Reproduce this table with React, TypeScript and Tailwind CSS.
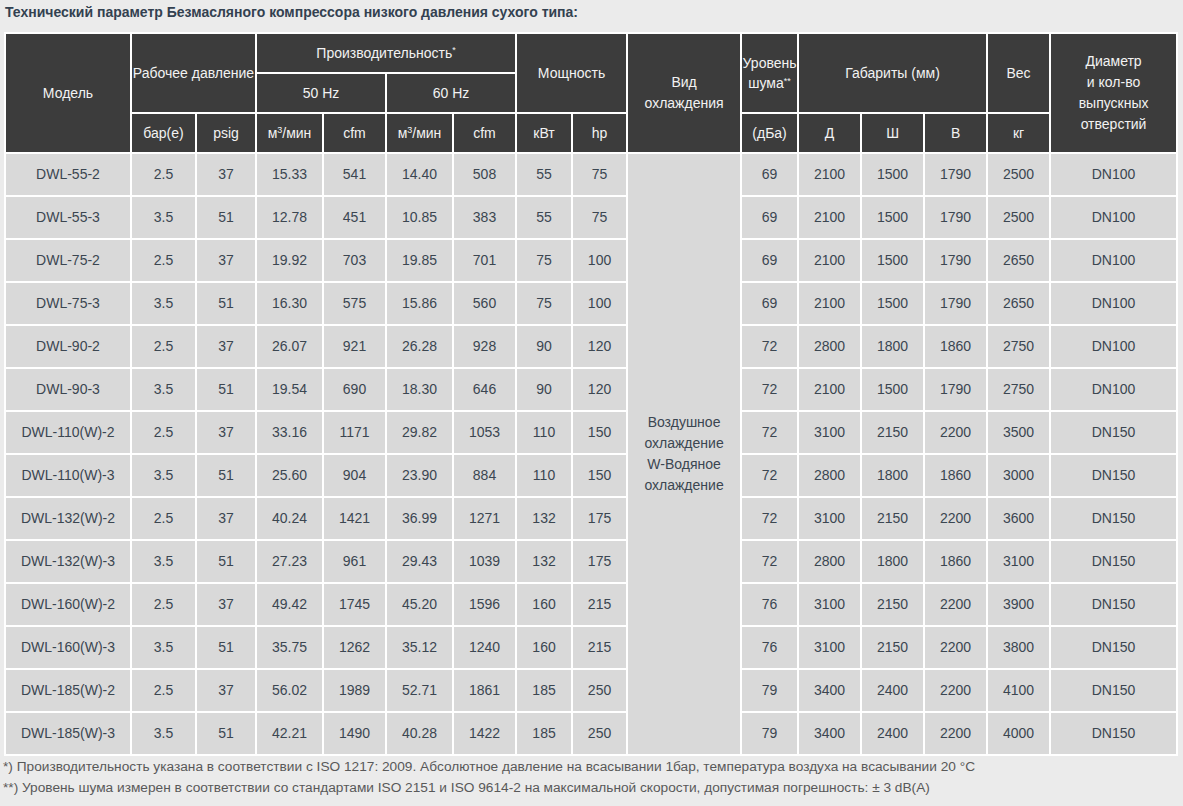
const COLS = [124, 63, 58, 65, 61, 65, 61, 54, 53, 112, 55, 61, 61, 61, 61, 125];

const ROWS: string[][] = [
  ["DWL-55-2", "2.5", "37", "15.33", "541", "14.40", "508", "55", "75", "69", "2100", "1500", "1790", "2500", "DN100"],
  ["DWL-55-3", "3.5", "51", "12.78", "451", "10.85", "383", "55", "75", "69", "2100", "1500", "1790", "2500", "DN100"],
  ["DWL-75-2", "2.5", "37", "19.92", "703", "19.85", "701", "75", "100", "69", "2100", "1500", "1790", "2650", "DN100"],
  ["DWL-75-3", "3.5", "51", "16.30", "575", "15.86", "560", "75", "100", "69", "2100", "1500", "1790", "2650", "DN100"],
  ["DWL-90-2", "2.5", "37", "26.07", "921", "26.28", "928", "90", "120", "72", "2800", "1800", "1860", "2750", "DN100"],
  ["DWL-90-3", "3.5", "51", "19.54", "690", "18.30", "646", "90", "120", "72", "2100", "1500", "1790", "2750", "DN100"],
  ["DWL-110(W)-2", "2.5", "37", "33.16", "1171", "29.82", "1053", "110", "150", "72", "3100", "2150", "2200", "3500", "DN150"],
  ["DWL-110(W)-3", "3.5", "51", "25.60", "904", "23.90", "884", "110", "150", "72", "2800", "1800", "1860", "3000", "DN150"],
  ["DWL-132(W)-2", "2.5", "37", "40.24", "1421", "36.99", "1271", "132", "175", "72", "3100", "2150", "2200", "3600", "DN150"],
  ["DWL-132(W)-3", "3.5", "51", "27.23", "961", "29.43", "1039", "132", "175", "72", "2800", "1800", "1860", "3100", "DN150"],
  ["DWL-160(W)-2", "2.5", "37", "49.42", "1745", "45.20", "1596", "160", "215", "76", "3100", "2150", "2200", "3900", "DN150"],
  ["DWL-160(W)-3", "3.5", "51", "35.75", "1262", "35.12", "1240", "160", "215", "76", "3100", "2150", "2200", "3800", "DN150"],
  ["DWL-185(W)-2", "2.5", "37", "56.02", "1989", "52.71", "1861", "185", "250", "79", "3400", "2400", "2200", "4100", "DN150"],
  ["DWL-185(W)-3", "3.5", "51", "42.21", "1490", "40.28", "1422", "185", "250", "79", "3400", "2400", "2200", "4000", "DN150"],
];

const th = "bg-[#3c3c3c] p-0 text-center align-middle font-normal text-[#f2f2f2] h-[38px] whitespace-nowrap";
const td = "bg-[#d9d9d9] p-0 text-center align-middle text-[#3b4651] h-[41px]";

export default function App() {
  return (
    <div className="min-h-[806px] w-[1183px] bg-[#ebebeb] font-['Liberation_Sans',Arial,sans-serif] text-[14px] leading-[21px]">
      <h3 className="pl-[5px] pt-[2px] text-[14px] font-bold leading-[20px] text-[#334150]">
        Технический параметр Безмасляного компрессора низкого давления сухого типа:
      </h3>

      <table className="ml-[4px] mt-[10px] table-fixed border-separate border-spacing-[2px] bg-white w-[1174px]">
        <colgroup>
          {COLS.map((w, i) => (
            <col key={i} style={{ width: w }} />
          ))}
        </colgroup>
        <thead>
          <tr>
            <th rowSpan={3} className={th}>Модель</th>
            <th rowSpan={2} colSpan={2} className={th}>Рабочее давление</th>
            <th colSpan={4} className={th}>
              Производительность<sup className="text-[9px]">*</sup>
            </th>
            <th rowSpan={2} colSpan={2} className={th}>Мощность</th>
            <th rowSpan={3} className={th}>
              Вид
              <br />
              охлаждения
            </th>
            <th rowSpan={2} className={`${th} leading-[20px]`}>
              Уровень
              <br />
              шума<sup className="text-[9px]">**</sup>
            </th>
            <th rowSpan={2} colSpan={3} className={th}>Габариты (мм)</th>
            <th rowSpan={2} className={th}>Вес</th>
            <th rowSpan={3} className={th}>
              Диаметр
              <br />
              и кол-во
              <br />
              выпускных
              <br />
              отверстий
            </th>
          </tr>
          <tr>
            <th colSpan={2} className={th}>50 Hz</th>
            <th colSpan={2} className={th}>60 Hz</th>
          </tr>
          <tr>
            <th className={th}>бар(е)</th>
            <th className={th}>psig</th>
            <th className={th}>
              м<sup className="text-[9px]">3</sup>/мин
            </th>
            <th className={th}>cfm</th>
            <th className={th}>
              м<sup className="text-[9px]">3</sup>/мин
            </th>
            <th className={th}>cfm</th>
            <th className={th}>кВт</th>
            <th className={th}>hp</th>
            <th className={th}>(дБа)</th>
            <th className={th}>Д</th>
            <th className={th}>Ш</th>
            <th className={th}>В</th>
            <th className={th}>кг</th>
          </tr>
        </thead>
        <tbody>
          {ROWS.map((r, ri) => (
            <tr key={r[0]}>
              {r.slice(0, 9).map((v, i) => (
                <td key={i} className={td}>{v}</td>
              ))}
              {ri === 0 ? (
                <td rowSpan={ROWS.length} className={td}>
                  Воздушное
                  <br />
                  охлаждение
                  <br />
                  W-Водяное
                  <br />
                  охлаждение
                </td>
              ) : null}
              {r.slice(9).map((v, i) => (
                <td key={i + 9} className={td}>{v}</td>
              ))}
            </tr>
          ))}
        </tbody>
      </table>

      <div className="pl-[3px] pt-0 text-[13.7px] leading-[21px] text-[#595959]">
        <p>
          *) Производительность указана в соответствии с ISO 1217: 2009. Абсолютное давление на всасывании
          1бар, температура воздуха на всасывании 20 °C
        </p>
        <p>
          **) Уровень шума измерен в соответствии со стандартами ISO 2151 и ISO 9614-2 на максимальной
          скорости, допустимая погрешность: ± 3 dB(A)
        </p>
      </div>
    </div>
  );
}
